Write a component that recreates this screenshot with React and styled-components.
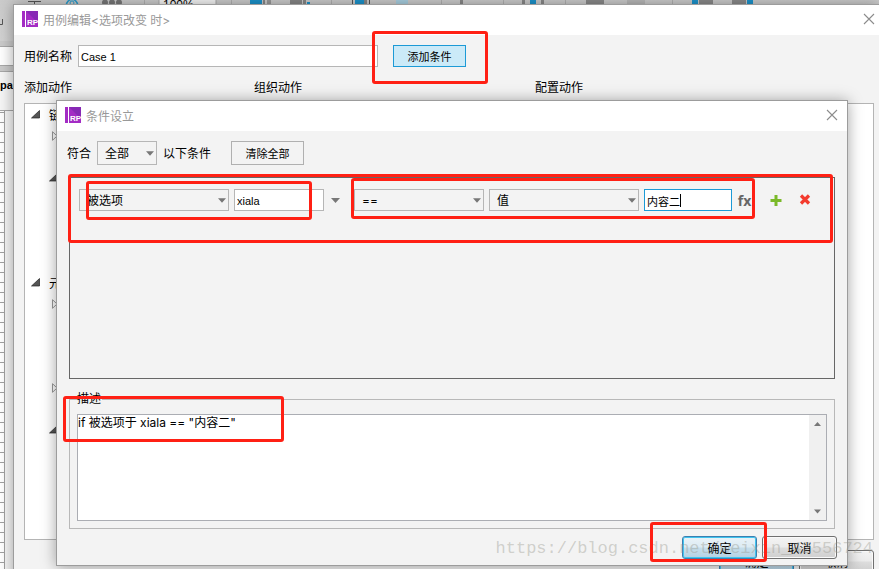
import React from "react";
import styled, { createGlobalStyle, css } from "styled-components";

const GlobalStyle = createGlobalStyle`
  *, *::before, *::after { box-sizing: border-box; }
  body { margin: 0; overflow: hidden; }
  body, button, input, select, textarea {
    font-family: "Open Sans", "Noto Sans CJK SC", sans-serif;
    font-size: 12px;
    color: #000;
  }
  button, input, select, textarea { margin: 0; border-radius: 0; outline: none; }
`;

/* ---------- application behind the dialogs ---------- */

const Desktop = styled.main`
  position: relative;
  min-height: 100vh;
  overflow: hidden;
  display: flex;
  flex-direction: column;
  background: #f6f6f6;
`;

const Toolbar = styled.header`
  height: 41px;
  background: linear-gradient(#cbcbcb, #d2d2d2);
`;

const ToolbarArt = styled.svg`
  display: block;
`;

const TabStrip = styled.div`
  height: 31px;
  padding: 5px 0;
  background: #cacaca;
  border-bottom: 1px solid #a8a8a8;
`;

const SearchField = styled.input`
  display: block;
  width: 100px;
  height: 20px;
  border: 1px solid #a8a8a8;
  border-left: 0;
  background: #fff;
`;

const PageTab = styled.div`
  height: 39px;
  line-height: 26px;
  overflow: hidden;
  font-family: "Liberation Sans", sans-serif;
  font-size: 11px;
  font-weight: bold;
  border-bottom: 1px solid #a8a8a8;
`;

const Ruler = styled.div`
  flex: 1;
  width: 5px;
  border-right: 1px solid #a0a0a0;
  background: repeating-linear-gradient(#fff 0 1px, #a0a0a0 1px 2px, #fff 2px 10px);
`;

/* ---------- dialogs ---------- */

const Dialog = styled.section`
  position: absolute;
  border: 1px solid #9c9c9c;
  background: #f3f3f3;
  box-shadow: 0 1px 14px rgba(0, 0, 0, 0.36);
`;

const CaseDialog = styled(Dialog)`
  top: 4px;
  left: 13px;
  right: 0;
  border-right: 0;
`;

const ConditionDialog = styled(Dialog)`
  top: 100px;
  left: 56px;
  right: 31px;
`;

const TitleBar = styled.div`
  display: flex;
  align-items: center;
  gap: 5px;
  height: 30px;
  padding: 0 ${(p) => p.$end}px 2px 8px;
  background: #fff;
`;

const Title = styled.h1`
  flex: 1;
  margin: 0;
  font-family: Inter, "Noto Sans CJK SC", sans-serif;
  font-size: 12px;
  font-weight: normal;
  color: #999;
`;

const IconButton = styled.button`
  display: flex;
  align-items: center;
  justify-content: center;
  width: ${(p) => p.$width || 12}px;
  height: 22px;
  padding: 0;
  border: 0;
  background: none;
`;

const FxButton = styled(IconButton)`
  font-size: 14px;
  font-weight: bold;
  color: #666;
`;

/* ---------- shared controls ---------- */

const FlatButton = styled.button`
  width: 73px;
  height: ${(p) => (p.$active ? 22 : 24)}px;
  padding: 0;
  font-size: 11px;
  border: 1px solid ${(p) => (p.$active ? "#1c9ad6" : "#b0b0b0")};
  background: ${(p) => (p.$active ? "#cbeaf8" : "#f3f3f3")};
`;

const DialogButton = styled.button`
  width: 75px;
  height: 23px;
  padding: 0;
  border: 1px solid #707070;
  border-radius: 3px;
  background: linear-gradient(#f3f3f3, #ebebeb 48%, #dddddd 52%, #cfcfcf);
  box-shadow: inset 0 0 0 1px #fafafa;
  ${(p) =>
    p.$primary &&
    css`
      border-color: #3c7fb1;
      background: linear-gradient(#eaf3f8, #dcebf3 48%, #c6deeb 52%, #b4d2e4);
      box-shadow: inset 0 0 0 1px #41c4ee;
    `}
`;

const TextField = styled.input`
  width: ${(p) => p.$width}px;
  height: 22px;
  padding: 2px 2px 0;
  font-family: "Liberation Sans", "Noto Sans CJK SC", sans-serif;
  font-size: 11px;
  border: 1px solid ${(p) => (p.$focused ? "#1c9ad6" : "#b6b6b6")};
  background: #fff;
`;

const SelectBox = styled.span`
  display: grid;
  align-items: center;
  width: ${(p) => p.$width}px;
  height: ${(p) => p.$height || 22}px;

  > * { grid-area: 1 / 1; }
  > svg { justify-self: end; margin-right: 3px; pointer-events: none; }
`;

const SelectControl = styled.select`
  appearance: none;
  width: 100%;
  height: 100%;
  padding: 0 16px 0 7px;
  border: 1px solid #b6b6b6;
  background: #f3f3f3;
  font-family: Inter, "Noto Sans CJK SC", sans-serif;
`;

const FocusedField = styled.span`
  display: grid;
  align-items: center;

  > * { grid-area: 1 / 1; }
`;

const Cursor = styled.span`
  width: 1px;
  height: 13px;
  margin-left: 36px;
  background: #000;
`;

/* ---------- case editor ---------- */

const CaseBody = styled.div`
  padding: 10px 5px 10px 10px;
`;

const NameRow = styled.div`
  display: flex;
  align-items: center;
  gap: 6px;
  height: 22px;
  line-height: 22px;

  > label { padding-top: 2px; }
`;

const Highlighted = styled.div`
  position: relative;
  display: flex;
  gap: ${(p) => p.$gap || 0}px;
  margin-left: ${(p) => p.$indent || 0}px;
`;

const Callout = styled.span`
  position: absolute;
  z-index: 3;
  border: 3px solid #ff2014;
  border-radius: 3px;
  pointer-events: none;
`;

const AddCallout = styled(Callout)`inset: -14px -22px -17px -21px;`;
const TargetCallout = styled(Callout)`inset: -8px 12px -9px 7px;`;
const ValueCallout = styled(Callout)`inset: -11px -3px -8px -3px;`;
const RuleCallout = styled(Callout)`inset: -4px 1px auto -2px; height: 69px;`;
const SummaryCallout = styled(Callout)`top: 5px; left: -6px; width: 221px; height: 46px;`;
const ConfirmCallout = styled(Callout)`inset: -14px -10px -3px -32px;`;

const Columns = styled.div`
  display: grid;
  grid-template-columns: 220px 271px 1fr;
  gap: 10px;
  margin-top: 10px;
`;

const ColumnTitle = styled.h2`
  margin: 0 0 4px;
  font-size: 12px;
  font-weight: normal;
  line-height: 22px;
`;

const Panel = styled.div`
  height: 437px;
  border: 1px solid #b4b4b4;
  background: #fff;
`;

const TreeRow = styled.div`
  display: flex;
  align-items: center;
  gap: 9px;
  height: 21px;
  padding-left: ${(p) => 6 + p.$depth * 18}px;
`;

const Footer = styled.footer`
  display: flex;
  justify-content: flex-end;
  gap: 5px;
  padding-top: ${(p) => p.$top}px;
`;

/* ---------- condition builder ---------- */

const ConditionBody = styled.div`
  padding: 10px 10px 6px;
`;

const MatchRow = styled.div`
  display: flex;
  align-items: center;
  gap: 6px;
`;

const Spacer = styled.span`
  width: ${(p) => p.$width}px;
`;

const RuleList = styled.div`
  position: relative;
  height: 202px;
  margin: 12px 2px 0;
  padding: 11px 9px;
  border: 1px solid #666;
`;

const RuleRow = styled.div`
  display: flex;
  align-items: center;
`;

const Description = styled.div`
  position: relative;
  margin: 12px 2px 0;
`;

const Group = styled.fieldset`
  min-width: 0;
  margin: 0;
  padding: 7px;
  border: 1px solid #b8b8b8;
`;

const Legend = styled.legend`
  padding: 0 1px 0 0;
  line-height: 16px;
`;

const SummaryBox = styled.div`
  display: flex;
  height: 107px;
  border: 1px solid #abadb3;
  background: #fff;
`;

const SummaryText = styled.textarea`
  flex: 1;
  min-width: 0;
  padding: 0;
  border: 0;
  resize: none;
  overflow: hidden;
  font-family: Inter, "Noto Sans CJK SC", sans-serif;
  line-height: 16px;
`;

const ScrollRail = styled.div`
  display: flex;
  flex-direction: column;
  justify-content: space-between;
  background: #f0f0f0;
`;

const ScrollButton = styled.button`
  width: 17px;
  height: 17px;
  padding: 0;
  border: 0;
  background: none;
  display: flex;
  align-items: center;
  justify-content: center;
`;

const Watermark = styled.div`
  position: absolute;
  z-index: 2;
  right: 6px;
  bottom: 8px;
  font-family: "Liberation Mono", monospace;
  font-size: 17px;
  line-height: 24px;
  color: rgba(150, 150, 140, 0.4);
  pointer-events: none;
`;

/* ---------- icons ---------- */

const Logo = () => (
  <svg width="16" height="16" viewBox="0 0 16 16" aria-hidden="true">
    <rect width="3" height="16" fill="#a32cc4" />
    <rect x="4" width="12" height="16" fill="#a32cc4" />
    <path d="M4 0H16V12Z" fill="#8729b5" />
    <text x="5" y="14" fill="#fff" fontFamily="Liberation Sans" fontSize="8" fontWeight="bold">RP</text>
  </svg>
);

const CloseIcon = () => (
  <svg width="12" height="12" viewBox="0 0 12 12" aria-hidden="true">
    <path d="M1 1L11 11M11 1L1 11" stroke="#8c8c8c" strokeWidth="1.1" fill="none" />
  </svg>
);

const DownArrow = ({ size = 9 }) => (
  <svg width={size} height="5" viewBox="0 0 9 5" aria-hidden="true">
    <path d="M0 0H9L4.5 5Z" fill="#777" />
  </svg>
);

const UpArrow = () => (
  <svg width="7" height="4" viewBox="0 0 7 4" aria-hidden="true">
    <path d="M0 4H7L3.5 0Z" fill="#777" />
  </svg>
);

const PlusIcon = () => (
  <svg width="12" height="12" viewBox="0 0 12 12" aria-hidden="true">
    <path d="M4.500 1H7.500V5H11.500V8H7.500V12H4.500V8H0.500V5H4.500Z" fill="#7ab929" />
  </svg>
);

const DeleteIcon = () => (
  <svg width="12" height="12" viewBox="0 0 12 12" aria-hidden="true">
    <path d="M2 1.500L10 9.500M10 1.500L2 9.500" stroke="#f33b2e" strokeWidth="3.2" fill="none" />
  </svg>
);

const OpenNode = () => (
  <svg width="9" height="9" viewBox="0 0 9 9" aria-hidden="true">
    <path d="M8.500 0.500V8H0.500Z" fill="#555" stroke="#222" strokeWidth="0.700" />
  </svg>
);

const ClosedNode = () => (
  <svg width="9" height="10" viewBox="0 0 9 10" aria-hidden="true">
    <path d="M3.500 0.700L8 5L3.500 9.300Z" fill="#fff" stroke="#999" />
  </svg>
);

const toolbarShapes = [
  [144, 1, "#b0b0b0"], [231, 1, "#b0b0b0"], [250, 12, "#1c93cc"], [263, 2, "#888"], [267, 4, "#999"],
  [290, 12, "#888"], [303, 3, "#888"], [331, 1, "#b0b0b0"], [352, 1, "#555"],
  [355, 9, "#1c93cc"], [364, 3, "#888"], [369, 1, "#555"], [396, 12, "#a9cfe0"],
  [441, 1, "#b0b0b0"], [460, 3, "#888"], [503, 1, "#b0b0b0"], [522, 3, "#888"],
  [530, 6, "#1c93cc"], [541, 3, "#888"], [565, 1, "#b0b0b0"], [586, 18, "#8a8a8a"],
  [627, 18, "#b8b8b8"], [672, 1, "#b0b0b0"], [692, 6, "#1c93cc"], [699, 14, "#8a8a8a"],
  [732, 14, "#8a8a8a"], [747, 6, "#1c93cc"],
];

const ToolbarIcons = () => (
  <ToolbarArt width="879" height="41" aria-hidden="true">
    <path d="M28 1.500H41M34.500 1V5" stroke="#555" fill="none" />
    <path d="M0 24.500H2.500V19" stroke="#555" fill="none" />
    <circle cx="72" cy="5" r="5.500" fill="none" stroke="#2b9ccc" strokeWidth="1.500" />
    <circle cx="72" cy="3" r="2" fill="none" stroke="#2b9ccc" />
    <circle cx="105" cy="2.500" r="3" fill="#777" />
    <circle cx="112" cy="2.500" r="3" fill="#777" />
    <circle cx="119" cy="2.500" r="3" fill="#777" />
    <rect x="159" y="-8" width="57" height="20" fill="#f4f4f4" stroke="#aaa" />
    <text x="163" y="9" fontFamily="Liberation Sans" fontSize="12">100%</text>
    <path d="M205 4H213L209 8Z" fill="#777" />
    {toolbarShapes.map(([x, w, fill]) => (
      <rect key={x} x={x} y="0" width={w} height="6" fill={fill} />
    ))}
    <rect x="307" y="2" width="3" height="3" fill="#1c93cc" />
  </ToolbarArt>
);

/* ---------- parts ---------- */

const Select = ({ width, height, label, value }) => (
  <SelectBox $width={width} $height={height}>
    <SelectControl aria-label={label} defaultValue={value}>
      <option>{value}</option>
    </SelectControl>
    <DownArrow size={8} />
  </SelectBox>
);

const tree = [
  { depth: 0, open: true, text: "链接" },
  { depth: 1 },
  {},
  { depth: 1, open: true },
  {}, {}, {}, {},
  { depth: 0, open: true, text: "元件" },
  { depth: 1 },
  {}, {}, {},
  { depth: 1 },
  {},
  { depth: 1, open: true },
];

const ActionTree = () => (
  <Panel>
    {tree.map((node, i) => (
      <TreeRow key={i} $depth={node.depth || 0}>
        {node.open && <OpenNode />}
        {!node.open && node.depth === 1 && <ClosedNode />}
        {node.text && <span>{node.text}</span>}
      </TreeRow>
    ))}
  </Panel>
);

const CaseEditor = () => (
  <CaseDialog aria-label="用例编辑">
    <TitleBar $end={4}>
      <Logo />
      <Title>用例编辑&lt;选项改变 时&gt;</Title>
      <IconButton aria-label="关闭"><CloseIcon /></IconButton>
    </TitleBar>
    <CaseBody>
      <NameRow>
        <label htmlFor="case-name">用例名称</label>
        <TextField id="case-name" $width={300} defaultValue="Case 1" />
        <Highlighted $indent={9}>
          <FlatButton $active>添加条件</FlatButton>
          <AddCallout />
        </Highlighted>
      </NameRow>
      <Columns>
        <div>
          <ColumnTitle>添加动作</ColumnTitle>
          <ActionTree />
        </div>
        <div>
          <ColumnTitle>组织动作</ColumnTitle>
          <Panel />
        </div>
        <div>
          <ColumnTitle>配置动作</ColumnTitle>
          <Panel />
        </div>
      </Columns>
      <Footer $top={10}>
        <DialogButton $primary>确定</DialogButton>
        <DialogButton>取消</DialogButton>
      </Footer>
    </CaseBody>
  </CaseDialog>
);

const ConditionBuilder = () => (
  <ConditionDialog aria-label="条件设立">
    <TitleBar $end={9}>
      <Logo />
      <Title>条件设立</Title>
      <IconButton aria-label="关闭"><CloseIcon /></IconButton>
    </TitleBar>
    <ConditionBody>
      <MatchRow>
        <span>符合</span>
        <Select width={60} height={24} label="符合" value="全部" />
        <span>以下条件</span>
        <Spacer $width={8} />
        <FlatButton>清除全部</FlatButton>
      </MatchRow>
      <RuleList>
        <RuleRow>
          <Highlighted $gap={5}>
            <Select width={150} label="条件类型" value="被选项" />
            <TextField $width={90} aria-label="元件" defaultValue="xiala" />
            <TargetCallout />
          </Highlighted>
          <IconButton $width={22} aria-label="选择元件"><DownArrow /></IconButton>
          <Highlighted $gap={5} $indent={8}>
            <Select width={130} label="比较" value="==" />
            <Select width={150} label="值类型" value="值" />
            <FocusedField>
              <TextField $width={88} $focused aria-label="值" defaultValue="内容二" />
              <Cursor />
            </FocusedField>
            <FxButton $width={15} aria-label="编辑函数">fx</FxButton>
            <ValueCallout />
          </Highlighted>
          <Spacer $width={18} />
          <IconButton aria-label="添加"><PlusIcon /></IconButton>
          <Spacer $width={17} />
          <IconButton aria-label="删除"><DeleteIcon /></IconButton>
        </RuleRow>
        <RuleCallout />
      </RuleList>
      <Description>
        <Group>
          <Legend>描述</Legend>
          <SummaryBox>
            <SummaryText aria-label="描述" readOnly defaultValue={'if 被选项于 xiala == "内容二"'} />
            <ScrollRail>
              <ScrollButton aria-label="向上滚动"><UpArrow /></ScrollButton>
              <ScrollButton aria-label="向下滚动"><DownArrow size={7} /></ScrollButton>
            </ScrollRail>
          </SummaryBox>
        </Group>
        <SummaryCallout />
      </Description>
      <Footer $top={7}>
        <Highlighted>
          <DialogButton $primary>确定</DialogButton>
          <ConfirmCallout />
        </Highlighted>
        <DialogButton>取消</DialogButton>
      </Footer>
    </ConditionBody>
  </ConditionDialog>
);

export default function App() {
  return (
    <>
      <GlobalStyle />
      <Desktop>
        <Toolbar><ToolbarIcons /></Toolbar>
        <TabStrip><SearchField aria-label="搜索" /></TabStrip>
        <PageTab>page</PageTab>
        <Ruler />
        <CaseEditor />
        <ConditionBuilder />
        <Watermark>https://blog.csdn.net/weixin_42556724</Watermark>
      </Desktop>
    </>
  );
}
